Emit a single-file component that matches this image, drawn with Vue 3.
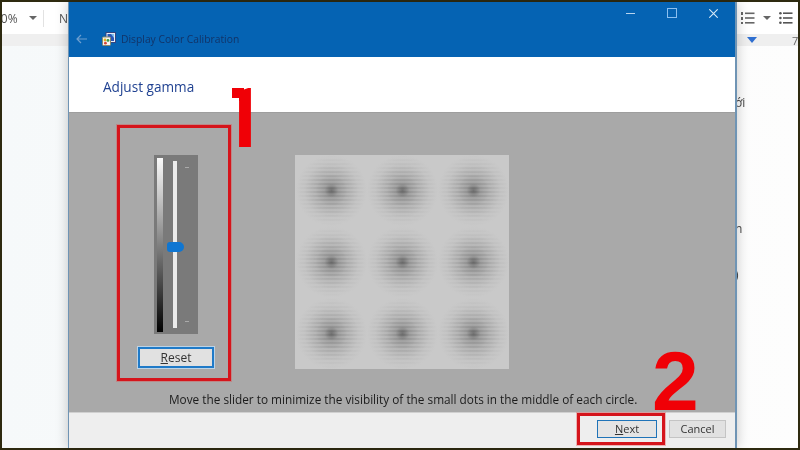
<script setup>
const spots = Array.from({ length: 9 }, (_, i) => i)
</script>

<template>
  <div class="page">
    <div class="doc">
      <div class="toolbar">
        <span class="zoomtxt">00%</span>
        <span class="caret caret-a"></span>
        <span class="divider"></span>
        <span class="fontname">N</span>
        <span class="spacer"></span>
        <svg class="listicon" width="14" height="14" viewBox="0 0 14 14">
          <g fill="#666">
            <rect x="0" y="1" width="2" height="3" />
            <rect x="0" y="6" width="2" height="3" />
            <rect x="0" y="11" width="2" height="2" />
            <rect x="4" y="1.5" width="9.5" height="1.6" />
            <rect x="4" y="6.2" width="9.5" height="1.6" />
            <rect x="4" y="11" width="9.5" height="1.6" />
          </g>
        </svg>
        <span class="caret caret-b"></span>
        <svg class="listicon bullets" width="14" height="14" viewBox="0 0 14 14">
          <g fill="#555">
            <circle cx="1.4" cy="2.2" r="1.3" />
            <circle cx="1.4" cy="7" r="1.3" />
            <circle cx="1.4" cy="11.8" r="1.3" />
            <rect x="4" y="1.4" width="9.5" height="1.6" />
            <rect x="4" y="6.2" width="9.5" height="1.6" />
            <rect x="4" y="11" width="9.5" height="1.6" />
          </g>
        </svg>
      </div>
      <div class="ruler">
        <span class="marker"></span>
        <span class="rulernum">7</span>
      </div>
      <div class="docbody">
        <span class="line l1">ới</span>
        <span class="line l2">n</span>
        <span class="line l3">)</span>
      </div>
    </div>

    <div class="dialog">
      <header class="titlebar">
        <div class="controls">
          <span class="ctl min"></span>
          <span class="ctl max"></span>
          <svg class="ctl close" width="9" height="9" viewBox="0 0 9 9">
            <path d="M0.3 0.3 8.7 8.7M8.7 0.3 0.3 8.7" stroke="#d6e8f7" stroke-width="1.1" fill="none" />
          </svg>
        </div>
        <div class="navrow">
          <svg class="back" width="11" height="10" viewBox="0 0 11 10">
            <path d="M11 5H1M5 1 1 5l4 4" stroke="#6f9fcf" stroke-width="1.2" fill="none" />
          </svg>
          <svg class="appicon" width="14" height="14" viewBox="0 0 14 14">
            <rect x="4" y="0.5" width="9.5" height="10" fill="#e9eef7" stroke="#33457f" />
            <rect x="5.5" y="2" width="6.5" height="7" fill="#2b56b8" />
            <path d="M9 2h3v4z" fill="#7ec0ee" />
            <rect x="0.5" y="5" width="8" height="8.5" rx="1" fill="#f4f4f4" stroke="#8a8a6a" />
            <circle cx="3" cy="8" r="1.4" fill="#e2b21f" />
            <circle cx="6" cy="8.4" r="1.4" fill="#3f9a45" />
            <circle cx="3.4" cy="11.2" r="1.4" fill="#d4453a" />
          </svg>
          <span class="apptitle">Display Color Calibration</span>
        </div>
      </header>

      <div class="heading">Adjust gamma</div>

      <main class="content">
        <div class="workrow">
          <div class="slidercol">
            <div class="sliderpanel">
              <span class="ramp"></span>
              <span class="track"><span class="thumb"></span></span>
              <span class="ticks"><i></i><i></i></span>
            </div>
            <button class="btn reset"><u>R</u>eset</button>
          </div>
          <div class="pattern">
            <span v-for="s in spots" :key="s" class="spot"></span>
          </div>
        </div>
        <p class="instruction">Move the slider to minimize the visibility of the small dots in the middle of each circle.</p>
      </main>

      <footer class="footer">
        <button class="btn next"><u>N</u>ext</button>
        <button class="btn cancel">Cancel</button>
      </footer>
    </div>

    <span class="redbox box1"></span>
    <span class="redbox box2"></span>
    <span class="bignum n1"><span class="digit">1</span></span>
    <span class="bignum n2">2</span>
  </div>
</template>

<style>
html, body { margin: 0; background: #2e2a10; }
</style>

<style scoped>
.page {
  position: relative;
  width: 800px;
  height: 450px;
  overflow: hidden;
  background: #2e2a10;
  font-family: "Open Sans", "Noto Sans", sans-serif;
  box-sizing: border-box;
  padding: 2px;
  filter: blur(0.3px);
}
.doc {
  display: flex;
  flex-direction: column;
  width: 796px;
  height: 446px;
  background: #fff;
  overflow: hidden;
}
.toolbar {
  display: flex;
  align-items: center;
  height: 32px;
  flex: none;
  color: #555;
  font-size: 12px;
}
.zoomtxt { margin-left: -8px; width: 35px; }
.caret {
  width: 0;
  height: 0;
  border-left: 4px solid transparent;
  border-right: 4px solid transparent;
  border-top: 4px solid #666;
}
.divider { width: 1px; height: 17px; background: #e2e2e2; margin-left: 6px; }
.fontname { margin-left: 15px; }
.spacer { flex: 1; }
.listicon { flex: none; }
.caret-b { margin-left: 8px; }
.bullets { margin-left: 8px; margin-right: 5px; }
.ruler {
  height: 12px;
  flex: none;
  background: #efefef;
  display: flex;
  align-items: center;
  color: #666;
  font-size: 11px;
}
.marker {
  margin-left: 745px;
  width: 0;
  height: 0;
  border-left: 5px solid transparent;
  border-right: 5px solid transparent;
  border-top: 6px solid #2f6fd0;
}
.rulernum { margin-left: 35px; }
.docbody {
  flex: 1;
  display: flex;
  flex-direction: column;
  align-items: flex-start;
  padding-left: 733px;
  background: linear-gradient(90deg, #f6f9fa 0, #fdfdfd 100%);
  color: #444;
  font-size: 12px;
  line-height: 14px;
}
.line { display: block; }
.l1 { margin-top: 50px; }
.l2 { margin-top: 112px; }
.l3 { margin-top: 32px; }

.dialog {
  position: absolute;
  left: 68px;
  top: 2px;
  width: 669px;
  height: 446px;
  box-sizing: border-box;
  display: flex;
  flex-direction: column;
  border-left: 1px solid #6f94b4;
  border-right: 2px solid #6f94b4;
  background: #fff;
  box-shadow: 0 0 12px rgba(0, 0, 0, 0.22);
}
.titlebar {
  height: 55px;
  flex: none;
  background: #0563b3;
  display: flex;
  flex-direction: column;
}
.controls {
  height: 20px;
  display: flex;
  align-items: center;
  justify-content: flex-end;
  padding-top: 1px;
}
.ctl { display: block; flex: none; }
.min { width: 9px; height: 1px; background: #b8d4ee; margin-right: 32px; }
.max { width: 10px; height: 10px; box-sizing: border-box; border: 1px solid #8cc0f0; margin-right: 32px; }
.close { margin-right: 17px; }
.navrow {
  display: flex;
  align-items: center;
  padding: 9px 0 0 7px;
}
.back { flex: none; }
.appicon { margin-left: 15px; flex: none; }
.apptitle {
  margin-left: 5px;
  color: #123468;
  font-size: 10.3px;
  line-height: 14px;
}
.heading {
  height: 55px;
  flex: none;
  box-sizing: border-box;
  padding: 20px 0 0 34px;
  color: #1f4191;
  font-size: 13.6px;
  line-height: 20px;
}
.content {
  flex: none;
  height: 300px;
  box-sizing: border-box;
  background: #a9a9a9;
  border-top: 1px solid #9e9e9e;
  display: flex;
  flex-direction: column;
  padding: 42px 0 0 69px;
}
.workrow {
  display: flex;
  align-items: flex-start;
  gap: 81px;
}
.slidercol {
  width: 76px;
  display: flex;
  flex-direction: column;
  align-items: center;
  gap: 13px;
}
.sliderpanel {
  width: 44px;
  height: 179px;
  background: #7a7a7a;
  display: flex;
  align-items: flex-start;
  box-sizing: border-box;
  padding: 3px 0 0 3px;
}
.ramp {
  width: 6px;
  height: 174px;
  flex: none;
  background: linear-gradient(180deg, #fafafa 0, #c8c8c8 22%, #808080 50%, #3a3a3a 78%, #000 100%);
}
.track {
  position: relative;
  display: block;
  flex: none;
  width: 4px;
  height: 167px;
  margin: 3px 0 0 10px;
  background: #ececec;
}
.thumb {
  position: absolute;
  left: -6px;
  top: 81px;
  width: 17px;
  height: 10px;
  background: #0f76d2;
  border-radius: 3px 5px 5px 3px;
}
.ticks {
  display: flex;
  flex-direction: column;
  justify-content: space-between;
  height: 155px;
  margin: 9px 0 0 8px;
}
.ticks i {
  display: block;
  width: 4px;
  height: 1px;
  background: #aaa;
}
.btn {
  display: block;
  box-sizing: border-box;
  margin: 0;
  padding: 0;
  border: 1px solid #a9a9a9;
  background: #e1e1e1;
  color: #333;
  font-family: inherit;
  font-size: 11px;
  line-height: 14px;
  text-align: center;
}
.reset {
  width: 76px;
  height: 21px;
  border: 2px solid #1f7ac8;
  outline: 1px solid #bcd3e6;
  font-size: 12px;
}
.pattern {
  width: 214px;
  height: 214px;
  flex: none;
  display: grid;
  grid-template-columns: repeat(3, 1fr);
  grid-template-rows: repeat(3, 1fr);
  padding: 0 0 0 1px;
  box-sizing: border-box;
  background: #c9c9c9;
}
.spot {
  position: relative;
  background: radial-gradient(circle at 50% 50%, #6e6e6e 0, #808080 3px, rgba(150, 150, 150, 0.85) 7px, rgba(172, 172, 172, 0.7) 16px, rgba(188, 188, 188, 0.3) 27px, rgba(201, 201, 201, 0) 36px);
}
.spot::before {
  content: "";
  position: absolute;
  inset: 0;
  background: repeating-linear-gradient(180deg, rgba(0, 0, 0, 0.06) 0 2px, rgba(255, 255, 255, 0.035) 2px 4px);
  -webkit-mask-image: radial-gradient(circle at 50% 50%, #000 0, #000 14px, transparent 35px);
  mask-image: radial-gradient(circle at 50% 50%, #000 0, #000 14px, transparent 35px);
}
.instruction {
  margin: 22px 0 0 31px;
  white-space: nowrap;
  color: #1c1c1c;
  font-size: 11.8px;
  line-height: 16px;
}
.footer {
  flex: 1;
  background: #eeeeee;
  border-top: 1px solid #d0d0d0;
  display: flex;
  align-items: flex-start;
  justify-content: flex-end;
  gap: 12px;
  padding: 7px 9px 0 0;
}
.next {
  width: 60px;
  height: 18px;
  border: 1px solid #1f73b8;
  background: #e4e4e4;
}
.cancel {
  width: 57px;
  height: 18px;
  background: #e1e1e1;
  border-color: #c4c4c4;
}
.redbox {
  position: absolute;
  box-sizing: border-box;
  border: 3px solid #d5141b;
  outline: 1px solid rgba(230, 70, 70, 0.35);
}
.box1 { left: 117px; top: 125px; width: 114px; height: 256px; }
.box2 { left: 577px; top: 413px; width: 88px; height: 32px; }
.bignum {
  position: absolute;
  color: #f00006;
  font-family: "Liberation Sans", Arial, sans-serif;
  font-weight: 700;
  font-size: 84px;
  line-height: 62px;
}
.n1 { left: 218px; top: 88px; width: 40px; font-family: Roboto, sans-serif; }
.n1::before {
  content: "";
  position: absolute;
  left: 14px;
  top: 0;
  width: 12px;
  height: 10px;
  background: #f00006;
}
.digit {
  display: block;
  clip-path: inset(0 0 0 21px);
}
.n2 { left: 652px; top: 350px; }
</style>
